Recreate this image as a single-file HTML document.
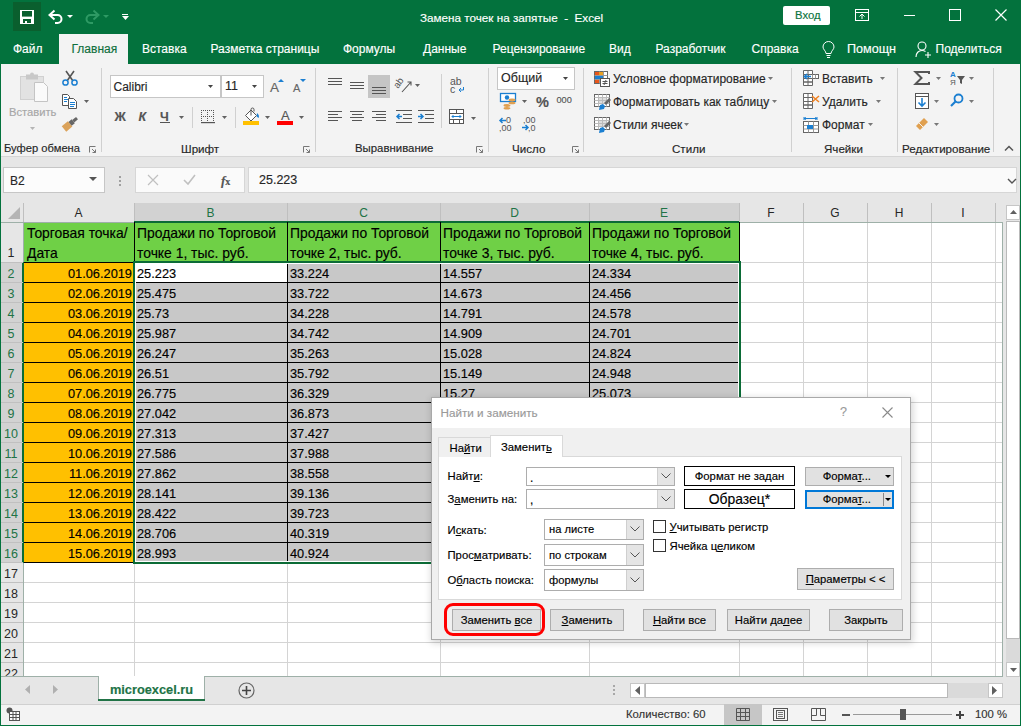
<!DOCTYPE html>
<html><head><meta charset="utf-8"><style>
html,body{margin:0;padding:0;width:1021px;height:726px;overflow:hidden;}
body{position:relative;font-family:"Liberation Sans",sans-serif;}
.a{position:absolute;box-sizing:border-box;}
.t{white-space:nowrap;-webkit-text-stroke:0.15px currentColor;}
svg.a{overflow:visible;}
</style></head><body>
<div class="a" style="left:0px;top:0px;width:1021px;height:726px;background:#03723d;"></div>
<div class="a" style="left:1px;top:64px;width:1019px;height:92px;background:#f3f3f3;"></div>
<div class="a" style="left:1px;top:156px;width:1019px;height:546px;background:#e6e6e6;"></div>
<div class="a" style="left:1px;top:156px;width:1019px;height:1px;background:#d5d5d5;"></div>
<div class="a" style="left:1px;top:702px;width:1019px;height:23px;background:#f3f3f3;"></div>
<div class="a" style="left:13px;top:2px;width:28px;height:29px;background:#0a5f2e;"></div>
<svg class="a" style="left:20px;top:10px;" width="14" height="14" viewBox="0 0 14 14"><rect x="0" y="0" width="14" height="14" fill="#fff"/><rect x="2" y="1" width="10" height="5.6" fill="#0a5f2e"/><rect x="3" y="9" width="8" height="4" fill="#0a5f2e"/><rect x="5" y="11" width="2" height="2" fill="#fff"/></svg>
<svg class="a" style="left:48px;top:9px;" width="16" height="15" viewBox="0 0 16 15"><path d="M3 6h6.5a4 4 0 0 1 0 8H7" fill="none" stroke="#fff" stroke-width="2"/><path d="M6.5 1.5L1.5 6l5 4.5" fill="none" stroke="#fff" stroke-width="2"/></svg>
<svg class="a" style="left:67px;top:15px;" width="6" height="3" viewBox="0 0 6 3"><path d="M0 0h6L3 3z" fill="#fff"/></svg>
<svg class="a" style="left:84px;top:9px;" width="16" height="15" viewBox="0 0 16 15"><path d="M13 6H6.5a4 4 0 0 0 0 8H9" fill="none" stroke="#2e9a64" stroke-width="2"/><path d="M9.5 1.5L14.5 6l-5 4.5" fill="none" stroke="#2e9a64" stroke-width="2"/></svg>
<svg class="a" style="left:103px;top:15px;" width="6" height="3" viewBox="0 0 6 3"><path d="M0 0h6L3 3z" fill="#2e9a64"/></svg>
<div class="a" style="left:122px;top:14px;width:6px;height:1px;background:#fff;"></div>
<svg class="a" style="left:122px;top:16px;" width="7" height="4" viewBox="0 0 7 4"><path d="M0 0h7L3.5 4z" fill="#fff"/></svg>
<div class="a t" style="left:420px;top:12.06px;font-size:11.7px;line-height:11.7px;color:#fff;">Замена точек на запятые&nbsp; -&nbsp; Excel</div>
<div class="a" style="left:783px;top:6px;width:47px;height:19px;background:#fff;border-radius:2px;"></div>
<div class="a t" style="left:795px;top:10.39px;font-size:11.3px;line-height:11.3px;color:#0b7440;">Вход</div>
<svg class="a" style="left:855px;top:9px;" width="14" height="12" viewBox="0 0 14 12"><rect x="0.5" y="0.5" width="13" height="11" fill="none" stroke="#fff"/><path d="M0.5 3.5h13" stroke="#fff"/><path d="M7 10V5M4.5 7.5L7 5l2.5 2.5" fill="none" stroke="#fff"/></svg>
<div class="a" style="left:904px;top:15px;width:11px;height:1px;background:#fff;"></div>
<svg class="a" style="left:949px;top:9px;" width="12" height="12" viewBox="0 0 12 12"><rect x="0.5" y="0.5" width="11" height="11" fill="none" stroke="#fff"/></svg>
<svg class="a" style="left:995px;top:9px;" width="12" height="12" viewBox="0 0 12 12"><path d="M0.5 0.5l11 11M11.5 0.5l-11 11" stroke="#fff" stroke-width="1.2"/></svg>
<div class="a" style="left:59px;top:34px;width:69px;height:30px;background:#f3f3f3;"></div>
<div class="a t" style="left:13px;top:43.30px;font-size:12px;line-height:12px;color:#fff;">Файл</div>
<div class="a t" style="left:71.5px;top:43.30px;font-size:12px;line-height:12px;color:#0f6f3c;">Главная</div>
<div class="a t" style="left:142px;top:43.30px;font-size:12px;line-height:12px;color:#fff;">Вставка</div>
<div class="a t" style="left:210.5px;top:43.30px;font-size:12px;line-height:12px;color:#fff;">Разметка страницы</div>
<div class="a t" style="left:343px;top:43.30px;font-size:12px;line-height:12px;color:#fff;">Формулы</div>
<div class="a t" style="left:423px;top:43.30px;font-size:12px;line-height:12px;color:#fff;">Данные</div>
<div class="a t" style="left:492.5px;top:43.30px;font-size:12px;line-height:12px;color:#fff;">Рецензирование</div>
<div class="a t" style="left:609px;top:43.30px;font-size:12px;line-height:12px;color:#fff;">Вид</div>
<div class="a t" style="left:655.5px;top:43.30px;font-size:12px;line-height:12px;color:#fff;">Разработчик</div>
<div class="a t" style="left:751.5px;top:43.30px;font-size:12px;line-height:12px;color:#fff;">Справка</div>
<div class="a t" style="left:847px;top:42.79px;font-size:12.6px;line-height:12.6px;color:#fff;">Помощн</div>
<div class="a t" style="left:935.5px;top:43.30px;font-size:12px;line-height:12px;color:#fff;">Поделиться</div>
<svg class="a" style="left:821.5px;top:41.5px;" width="13" height="17" viewBox="0 0 13 17"><path d="M4 11.5C4 9 1 7.5 1 5a5.5 5.5 0 0 1 11 0c0 2.5-3 4-3 6.5z" fill="none" stroke="#fff"/><path d="M4.5 13.5h4M5 15.5h3" stroke="#fff"/></svg>
<svg class="a" style="left:915px;top:41px;" width="17" height="17" viewBox="0 0 17 17"><circle cx="7" cy="5" r="4" fill="none" stroke="#fff" stroke-width="1.1"/><path d="M1 16c0-4 2.5-6.5 6-6.5 1.5 0 2.5 0.4 3.5 1" fill="none" stroke="#fff" stroke-width="1.1"/><path d="M13 11v6M10 14h6" stroke="#fff" stroke-width="1.1"/></svg>
<div class="a" style="left:101px;top:68px;width:1px;height:84px;background:#d0d0d0;"></div>
<div class="a" style="left:315px;top:68px;width:1px;height:84px;background:#d0d0d0;"></div>
<div class="a" style="left:488px;top:68px;width:1px;height:84px;background:#d0d0d0;"></div>
<div class="a" style="left:583px;top:68px;width:1px;height:84px;background:#d0d0d0;"></div>
<div class="a" style="left:791px;top:68px;width:1px;height:84px;background:#d0d0d0;"></div>
<div class="a" style="left:897px;top:68px;width:1px;height:84px;background:#d0d0d0;"></div>
<div class="a" style="left:993px;top:68px;width:1px;height:84px;background:#d0d0d0;"></div>
<svg class="a" style="left:20px;top:72px;" width="30" height="30" viewBox="0 0 30 30"><rect x="0.5" y="4.5" width="23" height="23" fill="#e2e2e2" stroke="#d0d0d0"/><rect x="6" y="2.5" width="12" height="5" fill="#c8c8c8"/><circle cx="12" cy="2.5" r="2" fill="#c8c8c8"/><path d="M14.5 10.5h9l4 4v15h-13z" fill="#fafafa" stroke="#c4c4c4"/></svg>
<div class="a t" style="left:9px;top:107.48px;font-size:11.2px;line-height:11.2px;color:#a6a6a6;">Вставить</div>
<svg class="a" style="left:30px;top:127px;" width="5" height="3" viewBox="0 0 5 3"><path d="M0 0h5L2.5 3z" fill="#b4b4b4"/></svg>
<svg class="a" style="left:62px;top:70px;" width="16" height="16" viewBox="0 0 16 16"><path d="M4 1l7 10M12 1L5 11" stroke="#555" stroke-width="1.6"/><circle cx="3.5" cy="12.5" r="2.6" fill="none" stroke="#1b7fd1" stroke-width="1.5"/><circle cx="12.5" cy="12.5" r="2.6" fill="none" stroke="#1b7fd1" stroke-width="1.5"/></svg>
<svg class="a" style="left:62px;top:94px;" width="16" height="15" viewBox="0 0 16 15"><path d="M0.5 0.5h5l2 2v9h-7z" fill="#fff" stroke="#555"/><path d="M6.5 4.5h5l3 3v7h-8z" fill="#fff" stroke="#555"/><path d="M2 3.5h3M2 5.5h4M2 7.5h3" stroke="#1b7fd1"/><path d="M8 8.5h5M8 10.5h5M8 12.5h4" stroke="#1b7fd1"/></svg>
<svg class="a" style="left:84px;top:100px;" width="5" height="3" viewBox="0 0 5 3"><path d="M0 0h5L2.5 3z" fill="#616161"/></svg>
<svg class="a" style="left:62px;top:116px;" width="17" height="15" viewBox="0 0 17 15"><g transform="rotate(-40 8.5 7.5)"><rect x="0" y="4" width="8" height="7" fill="#dba25a"/><rect x="8" y="5" width="4" height="5" fill="#666"/><rect x="12" y="6" width="5" height="3" fill="#666"/></g></svg>
<div class="a t" style="left:4px;top:142.88px;font-size:11.2px;line-height:11.2px;color:#262626;">Буфер обмена</div>
<svg class="a" style="left:89px;top:146px;" width="7" height="7" viewBox="0 0 7 7"><path d="M0.5 6.5v-6h6" fill="none" stroke="#777"/><path d="M3 3l3.5 3.5M6.5 3.5v3h-3" fill="none" stroke="#777"/></svg>
<div class="a" style="left:110px;top:75px;width:111px;height:23px;background:#fff;border:1px solid #c6c6c6;"></div>
<div class="a t" style="left:113.5px;top:80.80px;font-size:12px;line-height:12px;color:#262626;">Calibri</div>
<svg class="a" style="left:208px;top:85px;" width="5" height="3" viewBox="0 0 5 3"><path d="M0 0h5L2.5 3z" fill="#444"/></svg>
<div class="a" style="left:221px;top:75px;width:43px;height:23px;background:#fff;border:1px solid #c6c6c6;"></div>
<div class="a t" style="left:225px;top:80.38px;font-size:12.5px;line-height:12.5px;color:#262626;">11</div>
<svg class="a" style="left:252px;top:85px;" width="5" height="3" viewBox="0 0 5 3"><path d="M0 0h5L2.5 3z" fill="#444"/></svg>
<div class="a t" style="left:270px;top:80.53px;font-size:13.5px;line-height:13.5px;color:#666666;">A</div>
<svg class="a" style="left:278px;top:79px;" width="6" height="3" viewBox="0 0 6 3"><path d="M0 3h6L3 0z" fill="#1b7fd1"/></svg>
<div class="a t" style="left:293px;top:82.65px;font-size:11px;line-height:11px;color:#666666;">A</div>
<svg class="a" style="left:300px;top:79px;" width="6" height="3" viewBox="0 0 6 3"><path d="M0 0h6L3 3z" fill="#1b7fd1"/></svg>
<div class="a t" style="left:114.5px;top:111.38px;font-size:12.5px;line-height:12.5px;color:#555;font-weight:bold;">Ж</div>
<div class="a t" style="left:138.5px;top:111.38px;font-size:12.5px;line-height:12.5px;color:#555;font-weight:bold;font-style:italic;">К</div>
<div class="a t" style="left:160px;top:110.88px;font-size:12.5px;line-height:12.5px;color:#555;font-weight:bold;">Ч</div>
<div class="a" style="left:160px;top:122px;width:10px;height:1px;background:#555;"></div>
<svg class="a" style="left:179px;top:116px;" width="5" height="3" viewBox="0 0 5 3"><path d="M0 0h5L2.5 3z" fill="#616161"/></svg>
<div class="a" style="left:192px;top:107px;width:1px;height:21px;background:#d0d0d0;"></div>
<svg class="a" style="left:201px;top:110px;" width="14" height="14" viewBox="0 0 14 14"><rect x="0" y="0" width="1" height="1" fill="#555"/><rect x="2" y="0" width="1" height="1" fill="#555"/><rect x="4" y="0" width="1" height="1" fill="#555"/><rect x="6" y="0" width="1" height="1" fill="#555"/><rect x="8" y="0" width="1" height="1" fill="#555"/><rect x="10" y="0" width="1" height="1" fill="#555"/><rect x="12" y="0" width="1" height="1" fill="#555"/><rect x="0" y="2" width="1" height="1" fill="#555"/><rect x="6" y="2" width="1" height="1" fill="#555"/><rect x="12" y="2" width="1" height="1" fill="#555"/><rect x="0" y="4" width="1" height="1" fill="#555"/><rect x="6" y="4" width="1" height="1" fill="#555"/><rect x="12" y="4" width="1" height="1" fill="#555"/><rect x="0" y="6" width="1" height="1" fill="#555"/><rect x="2" y="6" width="1" height="1" fill="#555"/><rect x="4" y="6" width="1" height="1" fill="#555"/><rect x="6" y="6" width="1" height="1" fill="#555"/><rect x="8" y="6" width="1" height="1" fill="#555"/><rect x="10" y="6" width="1" height="1" fill="#555"/><rect x="12" y="6" width="1" height="1" fill="#555"/><rect x="0" y="8" width="1" height="1" fill="#555"/><rect x="6" y="8" width="1" height="1" fill="#555"/><rect x="12" y="8" width="1" height="1" fill="#555"/><rect x="0" y="10" width="1" height="1" fill="#555"/><rect x="6" y="10" width="1" height="1" fill="#555"/><rect x="12" y="10" width="1" height="1" fill="#555"/><rect x="0" y="12" width="14" height="1.2" fill="#555"/></svg>
<svg class="a" style="left:222px;top:116px;" width="5" height="3" viewBox="0 0 5 3"><path d="M0 0h5L2.5 3z" fill="#616161"/></svg>
<div class="a" style="left:235px;top:107px;width:1px;height:21px;background:#d0d0d0;"></div>
<svg class="a" style="left:243px;top:107px;" width="17" height="19" viewBox="0 0 17 19"><path d="M2.5 8.5L8 3l5.5 5.5L8 14z" fill="#fff" stroke="#555"/><path d="M8 8.5V2.5a1.5 1.5 0 0 1 3 0v2" fill="none" stroke="#555"/><path d="M14 6c2 1.8 2.3 3.5 1.6 5l-2-1.5z" fill="#1b7fd1"/><rect x="0" y="14" width="16" height="4" fill="#ffc000"/></svg>
<svg class="a" style="left:265px;top:116px;" width="5" height="3" viewBox="0 0 5 3"><path d="M0 0h5L2.5 3z" fill="#616161"/></svg>
<div class="a t" style="left:281px;top:109.45px;font-size:13px;line-height:13px;color:#555;">A</div>
<div class="a" style="left:277px;top:121px;width:16px;height:4px;background:#ff0000;"></div>
<svg class="a" style="left:299px;top:116px;" width="5" height="3" viewBox="0 0 5 3"><path d="M0 0h5L2.5 3z" fill="#616161"/></svg>
<div class="a t" style="left:181px;top:142.54px;font-size:11.6px;line-height:11.6px;color:#262626;">Шрифт</div>
<svg class="a" style="left:303px;top:146px;" width="7" height="7" viewBox="0 0 7 7"><path d="M0.5 6.5v-6h6" fill="none" stroke="#777"/><path d="M3 3l3.5 3.5M6.5 3.5v3h-3" fill="none" stroke="#777"/></svg>
<svg class="a" style="left:328px;top:78px;" width="16" height="12" viewBox="0 0 16 12"><rect x="0" y="0" width="14" height="1" fill="#555"/><rect x="0" y="3" width="14" height="1" fill="#555"/><rect x="0" y="6" width="14" height="1" fill="#555"/></svg>
<svg class="a" style="left:350px;top:82px;" width="16" height="12" viewBox="0 0 16 12"><rect x="0" y="0" width="14" height="1" fill="#555"/><rect x="0" y="3" width="14" height="1" fill="#555"/><rect x="0" y="6" width="14" height="1" fill="#555"/></svg>
<div class="a" style="left:368px;top:75px;width:22px;height:23px;background:#c5c5c5;"></div>
<svg class="a" style="left:372px;top:87px;" width="16" height="12" viewBox="0 0 16 12"><rect x="0" y="0" width="14" height="1" fill="#555"/><rect x="0" y="3" width="14" height="1" fill="#555"/><rect x="0" y="6" width="14" height="1" fill="#555"/></svg>
<svg class="a" style="left:396px;top:77px;" width="17" height="16" viewBox="0 0 17 16"><text x="0" y="0" font-size="9.5" font-family="Liberation Sans" fill="#555" transform="translate(2 12) rotate(-55)">ab</text><path d="M6 15L15 5M11.5 5h3.5v3.5" fill="none" stroke="#555" stroke-width="1.1"/></svg>
<svg class="a" style="left:415px;top:84px;" width="5" height="3" viewBox="0 0 5 3"><path d="M0 0h5L2.5 3z" fill="#616161"/></svg>
<svg class="a" style="left:328px;top:111px;" width="16" height="12" viewBox="0 0 16 12"><rect x="0" y="0" width="14" height="1" fill="#555"/><rect x="0" y="3" width="10" height="1" fill="#555"/><rect x="0" y="6" width="14" height="1" fill="#555"/><rect x="0" y="9" width="10" height="1" fill="#555"/></svg>
<svg class="a" style="left:350px;top:111px;" width="16" height="12" viewBox="0 0 16 12"><rect x="0" y="0" width="14" height="1" fill="#555"/><rect x="2" y="3" width="10" height="1" fill="#555"/><rect x="0" y="6" width="14" height="1" fill="#555"/><rect x="2" y="9" width="10" height="1" fill="#555"/></svg>
<svg class="a" style="left:372px;top:111px;" width="16" height="12" viewBox="0 0 16 12"><rect x="0" y="0" width="14" height="1" fill="#555"/><rect x="4" y="3" width="10" height="1" fill="#555"/><rect x="0" y="6" width="14" height="1" fill="#555"/><rect x="4" y="9" width="10" height="1" fill="#555"/></svg>
<svg class="a" style="left:396px;top:110px;" width="17" height="13" viewBox="0 0 17 13"><path d="M0 0.5h16M7 4.5h9M7 8.5h9M0 12.5h16" stroke="#555"/><path d="M6 6.5H1M3.5 4L1 6.5 3.5 9" fill="none" stroke="#1b7fd1" stroke-width="1.5"/></svg>
<svg class="a" style="left:418px;top:110px;" width="17" height="13" viewBox="0 0 17 13"><path d="M0 0.5h16M7 4.5h9M7 8.5h9M0 12.5h16" stroke="#555"/><path d="M0 6.5h5M2.5 4L5 6.5 2.5 9" fill="none" stroke="#1b7fd1" stroke-width="1.5"/></svg>
<div class="a" style="left:441px;top:74px;width:1px;height:54px;background:#d0d0d0;"></div>
<svg class="a" style="left:450px;top:77px;" width="16" height="17" viewBox="0 0 16 17"><text x="0" y="8" font-size="10.5" font-family="Liberation Sans" fill="#555">ab</text><text x="0" y="16" font-size="10.5" font-family="Liberation Sans" fill="#555">c</text><path d="M13.5 10v3H9M11 11l-2 2 2 2" fill="none" stroke="#1b7fd1"/></svg>
<svg class="a" style="left:449px;top:109px;" width="16" height="15" viewBox="0 0 16 15"><rect x="0.5" y="0.5" width="14" height="14" fill="#fff" stroke="#555"/><path d="M0.5 4.5h14M0.5 10.5h14M7.5 0.5v4M4.5 10.5v4M10.5 10.5v4" stroke="#555"/><path d="M3 7.5h9M4.5 6L3 7.5 4.5 9M10.5 6L12 7.5 10.5 9" fill="none" stroke="#1b7fd1"/></svg>
<svg class="a" style="left:471px;top:117px;" width="5" height="3" viewBox="0 0 5 3"><path d="M0 0h5L2.5 3z" fill="#616161"/></svg>
<div class="a t" style="left:355px;top:142.71px;font-size:11.4px;line-height:11.4px;color:#262626;">Выравнивание</div>
<svg class="a" style="left:476px;top:146px;" width="7" height="7" viewBox="0 0 7 7"><path d="M0.5 6.5v-6h6" fill="none" stroke="#777"/><path d="M3 3l3.5 3.5M6.5 3.5v3h-3" fill="none" stroke="#777"/></svg>
<div class="a" style="left:497px;top:67px;width:78px;height:23px;background:#fff;border:1px solid #c6c6c6;"></div>
<div class="a t" style="left:501px;top:72.38px;font-size:12.5px;line-height:12.5px;color:#262626;">Общий</div>
<svg class="a" style="left:563px;top:77px;" width="5" height="3" viewBox="0 0 5 3"><path d="M0 0h5L2.5 3z" fill="#444"/></svg>
<svg class="a" style="left:500px;top:93px;" width="17" height="17" viewBox="0 0 17 17"><rect x="0.5" y="0.5" width="15" height="8" fill="#fff" stroke="#1b7fd1" stroke-width="1.3"/><circle cx="7" cy="4.5" r="2.2" fill="#1b7fd1"/><ellipse cx="12" cy="7" rx="3.5" ry="1.4" fill="#e0a050"/><ellipse cx="12" cy="10" rx="3.5" ry="1.3" fill="#e0a050"/><ellipse cx="7" cy="12.5" rx="3.5" ry="1.4" fill="#e0a050"/><ellipse cx="7" cy="15.3" rx="3.5" ry="1.3" fill="#e0a050"/></svg>
<svg class="a" style="left:522px;top:100px;" width="5" height="3" viewBox="0 0 5 3"><path d="M0 0h5L2.5 3z" fill="#616161"/></svg>
<div class="a t" style="left:536px;top:95.17px;font-size:14.5px;line-height:14.5px;color:#555;font-weight:bold;">%</div>
<div class="a t" style="left:556.5px;top:96.18px;font-size:9.2px;line-height:9.2px;color:#555;">000</div>
<svg class="a" style="left:498px;top:116px;" width="20" height="15" viewBox="0 0 20 15"><path d="M8 4.5H2M4.5 2L2 4.5l2.5 2.5" fill="none" stroke="#1b7fd1" stroke-width="1.5"/><text x="8" y="7" font-size="9" font-family="Liberation Sans" fill="#555">0</text><text x="1" y="14.5" font-size="9" font-family="Liberation Sans" fill="#555">,00</text></svg>
<svg class="a" style="left:522px;top:116px;" width="20" height="15" viewBox="0 0 20 15"><text x="1" y="7" font-size="9" font-family="Liberation Sans" fill="#555">,00</text><path d="M0 11.5h6M3.5 9L6 11.5 3.5 14" fill="none" stroke="#1b7fd1" stroke-width="1.5"/><text x="6" y="14.5" font-size="9" font-family="Liberation Sans" fill="#555">,0</text></svg>
<div class="a t" style="left:512px;top:142.54px;font-size:11.6px;line-height:11.6px;color:#262626;">Число</div>
<svg class="a" style="left:572px;top:146px;" width="7" height="7" viewBox="0 0 7 7"><path d="M0.5 6.5v-6h6" fill="none" stroke="#777"/><path d="M3 3l3.5 3.5M6.5 3.5v3h-3" fill="none" stroke="#777"/></svg>
<svg class="a" style="left:594px;top:71px;" width="17" height="17" viewBox="0 0 17 17"><rect x="0.5" y="0.5" width="13" height="12" fill="#fff" stroke="#666"/><path d="M0.5 4.5h13M0.5 8.5h13M5.5 0.5v12M9.5 0.5v12" stroke="#999"/><rect x="1" y="1" width="4" height="3" fill="#e8561b"/><rect x="5" y="1" width="4" height="3" fill="#e8a020"/><rect x="1" y="5" width="8" height="3" fill="#1b7fd1"/><rect x="1" y="9" width="4" height="3" fill="#e8561b"/><rect x="6.5" y="7.5" width="9" height="8" fill="#fff" stroke="#555"/><path d="M8.5 10.5h5M8.5 12.5h5M12 9l-2 5" stroke="#555"/></svg>
<div class="a t" style="left:613px;top:73.30px;font-size:12px;line-height:12px;color:#262626;">Условное форматирование</div>
<svg class="a" style="left:768px;top:77px;" width="5" height="3" viewBox="0 0 5 3"><path d="M0 0h5L2.5 3z" fill="#777"/></svg>
<svg class="a" style="left:594px;top:94px;" width="18" height="17" viewBox="0 0 18 17"><rect x="0.5" y="0.5" width="15" height="12" fill="#fff" stroke="#666"/><rect x="4" y="4" width="8" height="6" fill="#ddd"/><path d="M0.5 3.5h15M0.5 6.5h15M0.5 9.5h15M4.5 0.5v12M8.5 0.5v12M12.5 0.5v12" stroke="#bbb"/><path d="M10 9l5-5 2 2-5 5z" fill="#666"/><path d="M5 16l1-5 3-1 2 2-1 3z" fill="#1b7fd1"/></svg>
<div class="a t" style="left:613px;top:96.30px;font-size:12px;line-height:12px;color:#262626;">Форматировать как таблицу</div>
<svg class="a" style="left:772px;top:100px;" width="5" height="3" viewBox="0 0 5 3"><path d="M0 0h5L2.5 3z" fill="#777"/></svg>
<svg class="a" style="left:594px;top:117px;" width="18" height="17" viewBox="0 0 18 17"><rect x="0.5" y="0.5" width="15" height="12" fill="#fff" stroke="#666"/><rect x="4" y="4" width="8" height="6" fill="#ddd"/><path d="M0.5 3.5h15M0.5 6.5h15M0.5 9.5h15M4.5 0.5v12M8.5 0.5v12M12.5 0.5v12" stroke="#bbb"/><path d="M10 9l5-5 2 2-5 5z" fill="#666"/><path d="M5 16l1-5 3-1 2 2-1 3z" fill="#1b7fd1"/></svg>
<div class="a t" style="left:613px;top:119.30px;font-size:12px;line-height:12px;color:#262626;">Стили ячеек</div>
<svg class="a" style="left:684px;top:123px;" width="5" height="3" viewBox="0 0 5 3"><path d="M0 0h5L2.5 3z" fill="#777"/></svg>
<div class="a t" style="left:672px;top:142.54px;font-size:11.6px;line-height:11.6px;color:#262626;">Стили</div>
<svg class="a" style="left:803px;top:70px;" width="17" height="17" viewBox="0 0 17 17"><path d="M0.5 0.5h9v4h-9zM0.5 4.5h9v4h-9zM0.5 8.5h9v3.5h-9zM0.5 12h9v3.5h-9zM5 0.5v15" fill="#fff" stroke="#666"/><rect x="5.5" y="4.5" width="10" height="4" fill="#fff" stroke="#666"/><path d="M9.5 4.5v4M12.5 4.5v4" stroke="#999"/><path d="M8 6.5H1.5M4 4L1.5 6.5 4 9" fill="none" stroke="#1b7fd1" stroke-width="1.6"/></svg>
<div class="a t" style="left:822px;top:73.30px;font-size:12px;line-height:12px;color:#262626;">Вставить</div>
<svg class="a" style="left:880px;top:77px;" width="5" height="3" viewBox="0 0 5 3"><path d="M0 0h5L2.5 3z" fill="#777"/></svg>
<svg class="a" style="left:803px;top:93px;" width="17" height="17" viewBox="0 0 17 17"><path d="M0.5 0.5h9v4h-9zM0.5 4.5h9v4h-9zM0.5 8.5h9v3.5h-9zM0.5 12h9v3.5h-9zM5 0.5v15" fill="#fff" stroke="#666"/><path d="M9 3l7 6M16 3l-7 6" stroke="#f08020" stroke-width="1.5"/></svg>
<div class="a t" style="left:822px;top:96.30px;font-size:12px;line-height:12px;color:#262626;">Удалить</div>
<svg class="a" style="left:876px;top:100px;" width="5" height="3" viewBox="0 0 5 3"><path d="M0 0h5L2.5 3z" fill="#777"/></svg>
<svg class="a" style="left:803px;top:117px;" width="17" height="17" viewBox="0 0 17 17"><rect x="0.5" y="4.5" width="15" height="11" fill="#fff" stroke="#666"/><path d="M0.5 8.5h15M0.5 12h15M5.5 4.5v11M10.5 4.5v11" stroke="#999"/><rect x="4" y="8" width="6" height="4" fill="#1b7fd1"/><path d="M1 1.5h13M1 0v3M14 0v3M3 0.5L1 1.5 3 2.5M12 0.5L14 1.5 12 2.5" fill="none" stroke="#1b7fd1"/></svg>
<div class="a t" style="left:822px;top:119.30px;font-size:12px;line-height:12px;color:#262626;">Формат</div>
<svg class="a" style="left:868px;top:123px;" width="5" height="3" viewBox="0 0 5 3"><path d="M0 0h5L2.5 3z" fill="#777"/></svg>
<div class="a t" style="left:824px;top:142.54px;font-size:11.6px;line-height:11.6px;color:#262626;">Ячейки</div>
<svg class="a" style="left:914px;top:71px;" width="16" height="14" viewBox="0 0 16 14"><path d="M15 3V1H1.5l6 6-6 6H15v-2" fill="none" stroke="#555" stroke-width="2"/></svg>
<svg class="a" style="left:936px;top:77px;" width="5" height="3" viewBox="0 0 5 3"><path d="M0 0h5L2.5 3z" fill="#777"/></svg>
<svg class="a" style="left:950px;top:70px;" width="16" height="16" viewBox="0 0 16 16"><text x="0" y="7" font-size="8" font-family="Liberation Sans" font-weight="bold" fill="#1b7fd1">A</text><text x="0" y="15" font-size="8" font-family="Liberation Sans" fill="#555">Я</text><path d="M7 6h8l-3 4v4l-2-1v-3z" fill="#555"/></svg>
<svg class="a" style="left:969px;top:77px;" width="5" height="3" viewBox="0 0 5 3"><path d="M0 0h5L2.5 3z" fill="#777"/></svg>
<svg class="a" style="left:915px;top:93px;" width="15" height="16" viewBox="0 0 15 16"><rect x="0.5" y="0.5" width="13" height="15" fill="#fff" stroke="#555"/><path d="M0.5 3.5h13" stroke="#555"/><path d="M7 5v8M3.5 9.5L7 13l3.5-3.5" fill="none" stroke="#1b7fd1" stroke-width="1.6"/></svg>
<svg class="a" style="left:934px;top:100px;" width="5" height="3" viewBox="0 0 5 3"><path d="M0 0h5L2.5 3z" fill="#777"/></svg>
<svg class="a" style="left:950px;top:93px;" width="14" height="14" viewBox="0 0 14 14"><circle cx="8.5" cy="5.5" r="4" fill="none" stroke="#1b7fd1" stroke-width="1.8"/><path d="M6 8l-5 5" stroke="#1b7fd1" stroke-width="2.2"/></svg>
<svg class="a" style="left:969px;top:100px;" width="5" height="3" viewBox="0 0 5 3"><path d="M0 0h5L2.5 3z" fill="#777"/></svg>
<svg class="a" style="left:915px;top:117px;" width="14" height="13" viewBox="0 0 14 13"><path d="M1 9l8-8 4 4-8 8z" fill="#e0a050"/><path d="M4 6l4 4" stroke="#f3f3f3"/></svg>
<svg class="a" style="left:934px;top:123px;" width="5" height="3" viewBox="0 0 5 3"><path d="M0 0h5L2.5 3z" fill="#777"/></svg>
<div class="a t" style="left:902px;top:142.54px;font-size:11.6px;line-height:11.6px;color:#262626;">Редактирование</div>
<svg class="a" style="left:1004px;top:145px;" width="10" height="6" viewBox="0 0 10 6"><path d="M1 5.5L5 1.5l4 4" fill="none" stroke="#555" stroke-width="1.5"/></svg>
<div class="a" style="left:24px;top:223px;width:978px;height:453px;background:#fff;"></div>
<div class="a" style="left:134px;top:203px;width:605px;height:19px;background:#d2d2d2;"></div>
<div class="a" style="left:23px;top:203px;width:1px;height:19px;background:#bfbfbf;"></div>
<div class="a" style="left:134px;top:203px;width:1px;height:19px;background:#bfbfbf;"></div>
<div class="a" style="left:287px;top:203px;width:1px;height:19px;background:#bfbfbf;"></div>
<div class="a" style="left:440px;top:203px;width:1px;height:19px;background:#bfbfbf;"></div>
<div class="a" style="left:589px;top:203px;width:1px;height:19px;background:#bfbfbf;"></div>
<div class="a" style="left:739px;top:203px;width:1px;height:19px;background:#bfbfbf;"></div>
<div class="a" style="left:803px;top:203px;width:1px;height:19px;background:#bfbfbf;"></div>
<div class="a" style="left:867px;top:203px;width:1px;height:19px;background:#bfbfbf;"></div>
<div class="a" style="left:931px;top:203px;width:1px;height:19px;background:#bfbfbf;"></div>
<div class="a" style="left:995px;top:203px;width:1px;height:19px;background:#bfbfbf;"></div>
<div class="a" style="left:23px;top:203px;width:1px;height:19px;background:#bfbfbf;"></div>
<div class="a" style="left:1px;top:222px;width:1001px;height:1px;background:#9eb0a8;"></div>
<div class="a" style="left:134px;top:221px;width:605px;height:2px;background:#0b6b36;"></div>
<svg class="a" style="left:8px;top:207px;" width="13" height="12" viewBox="0 0 13 12"><path d="M12 0V12H0z" fill="#b4b4b4"/></svg>
<div class="a t" style="left:23px;top:207.30px;font-size:12px;line-height:12px;color:#262626;width:111px;text-align:center;-webkit-text-stroke:0;">A</div>
<div class="a t" style="left:134px;top:207.30px;font-size:12px;line-height:12px;color:#217346;width:153px;text-align:center;-webkit-text-stroke:0;">B</div>
<div class="a t" style="left:287px;top:207.30px;font-size:12px;line-height:12px;color:#217346;width:153px;text-align:center;-webkit-text-stroke:0;">C</div>
<div class="a t" style="left:440px;top:207.30px;font-size:12px;line-height:12px;color:#217346;width:149px;text-align:center;-webkit-text-stroke:0;">D</div>
<div class="a t" style="left:589px;top:207.30px;font-size:12px;line-height:12px;color:#217346;width:150px;text-align:center;-webkit-text-stroke:0;">E</div>
<div class="a t" style="left:739px;top:207.30px;font-size:12px;line-height:12px;color:#262626;width:64px;text-align:center;-webkit-text-stroke:0;">F</div>
<div class="a t" style="left:803px;top:207.30px;font-size:12px;line-height:12px;color:#262626;width:64px;text-align:center;-webkit-text-stroke:0;">G</div>
<div class="a t" style="left:867px;top:207.30px;font-size:12px;line-height:12px;color:#262626;width:64px;text-align:center;-webkit-text-stroke:0;">H</div>
<div class="a t" style="left:931px;top:207.30px;font-size:12px;line-height:12px;color:#262626;width:64px;text-align:center;-webkit-text-stroke:0;">I</div>
<div class="a" style="left:1px;top:262px;width:22px;height:300px;background:#d2d2d2;"></div>
<div class="a" style="left:22px;top:262px;width:2px;height:301px;background:#0b6b36;"></div>
<div class="a" style="left:23px;top:223px;width:1px;height:39px;background:#9eb0a8;"></div>
<div class="a" style="left:23px;top:563px;width:1px;height:113px;background:#9eb0a8;"></div>
<div class="a" style="left:1px;top:262px;width:22px;height:1px;background:#c0c0c0;"></div>
<div class="a" style="left:1px;top:282px;width:22px;height:1px;background:#c0c0c0;"></div>
<div class="a" style="left:1px;top:302px;width:22px;height:1px;background:#c0c0c0;"></div>
<div class="a" style="left:1px;top:322px;width:22px;height:1px;background:#c0c0c0;"></div>
<div class="a" style="left:1px;top:342px;width:22px;height:1px;background:#c0c0c0;"></div>
<div class="a" style="left:1px;top:362px;width:22px;height:1px;background:#c0c0c0;"></div>
<div class="a" style="left:1px;top:382px;width:22px;height:1px;background:#c0c0c0;"></div>
<div class="a" style="left:1px;top:402px;width:22px;height:1px;background:#c0c0c0;"></div>
<div class="a" style="left:1px;top:422px;width:22px;height:1px;background:#c0c0c0;"></div>
<div class="a" style="left:1px;top:442px;width:22px;height:1px;background:#c0c0c0;"></div>
<div class="a" style="left:1px;top:462px;width:22px;height:1px;background:#c0c0c0;"></div>
<div class="a" style="left:1px;top:482px;width:22px;height:1px;background:#c0c0c0;"></div>
<div class="a" style="left:1px;top:502px;width:22px;height:1px;background:#c0c0c0;"></div>
<div class="a" style="left:1px;top:522px;width:22px;height:1px;background:#c0c0c0;"></div>
<div class="a" style="left:1px;top:542px;width:22px;height:1px;background:#c0c0c0;"></div>
<div class="a" style="left:1px;top:562px;width:22px;height:1px;background:#c0c0c0;"></div>
<div class="a" style="left:1px;top:582px;width:22px;height:1px;background:#c0c0c0;"></div>
<div class="a" style="left:1px;top:602px;width:22px;height:1px;background:#c0c0c0;"></div>
<div class="a" style="left:1px;top:622px;width:22px;height:1px;background:#c0c0c0;"></div>
<div class="a" style="left:1px;top:642px;width:22px;height:1px;background:#c0c0c0;"></div>
<div class="a" style="left:1px;top:662px;width:22px;height:1px;background:#c0c0c0;"></div>
<div class="a t" style="left:0px;top:246.88px;font-size:12.5px;line-height:12.5px;color:#262626;width:22px;text-align:center;-webkit-text-stroke:0;">1</div>
<div class="a t" style="left:0px;top:267.88px;font-size:12.5px;line-height:12.5px;color:#217346;width:22px;text-align:center;-webkit-text-stroke:0;">2</div>
<div class="a t" style="left:0px;top:287.88px;font-size:12.5px;line-height:12.5px;color:#217346;width:22px;text-align:center;-webkit-text-stroke:0;">3</div>
<div class="a t" style="left:0px;top:307.88px;font-size:12.5px;line-height:12.5px;color:#217346;width:22px;text-align:center;-webkit-text-stroke:0;">4</div>
<div class="a t" style="left:0px;top:327.88px;font-size:12.5px;line-height:12.5px;color:#217346;width:22px;text-align:center;-webkit-text-stroke:0;">5</div>
<div class="a t" style="left:0px;top:347.88px;font-size:12.5px;line-height:12.5px;color:#217346;width:22px;text-align:center;-webkit-text-stroke:0;">6</div>
<div class="a t" style="left:0px;top:367.88px;font-size:12.5px;line-height:12.5px;color:#217346;width:22px;text-align:center;-webkit-text-stroke:0;">7</div>
<div class="a t" style="left:0px;top:387.88px;font-size:12.5px;line-height:12.5px;color:#217346;width:22px;text-align:center;-webkit-text-stroke:0;">8</div>
<div class="a t" style="left:0px;top:407.88px;font-size:12.5px;line-height:12.5px;color:#217346;width:22px;text-align:center;-webkit-text-stroke:0;">9</div>
<div class="a t" style="left:0px;top:427.88px;font-size:12.5px;line-height:12.5px;color:#217346;width:22px;text-align:center;-webkit-text-stroke:0;">10</div>
<div class="a t" style="left:0px;top:447.88px;font-size:12.5px;line-height:12.5px;color:#217346;width:22px;text-align:center;-webkit-text-stroke:0;">11</div>
<div class="a t" style="left:0px;top:467.88px;font-size:12.5px;line-height:12.5px;color:#217346;width:22px;text-align:center;-webkit-text-stroke:0;">12</div>
<div class="a t" style="left:0px;top:487.88px;font-size:12.5px;line-height:12.5px;color:#217346;width:22px;text-align:center;-webkit-text-stroke:0;">13</div>
<div class="a t" style="left:0px;top:507.88px;font-size:12.5px;line-height:12.5px;color:#217346;width:22px;text-align:center;-webkit-text-stroke:0;">14</div>
<div class="a t" style="left:0px;top:527.88px;font-size:12.5px;line-height:12.5px;color:#217346;width:22px;text-align:center;-webkit-text-stroke:0;">15</div>
<div class="a t" style="left:0px;top:547.88px;font-size:12.5px;line-height:12.5px;color:#217346;width:22px;text-align:center;-webkit-text-stroke:0;">16</div>
<div class="a t" style="left:0px;top:567.88px;font-size:12.5px;line-height:12.5px;color:#262626;width:22px;text-align:center;-webkit-text-stroke:0;">17</div>
<div class="a t" style="left:0px;top:587.88px;font-size:12.5px;line-height:12.5px;color:#262626;width:22px;text-align:center;-webkit-text-stroke:0;">18</div>
<div class="a t" style="left:0px;top:607.88px;font-size:12.5px;line-height:12.5px;color:#262626;width:22px;text-align:center;-webkit-text-stroke:0;">19</div>
<div class="a t" style="left:0px;top:627.88px;font-size:12.5px;line-height:12.5px;color:#262626;width:22px;text-align:center;-webkit-text-stroke:0;">20</div>
<div class="a t" style="left:0px;top:647.88px;font-size:12.5px;line-height:12.5px;color:#262626;width:22px;text-align:center;-webkit-text-stroke:0;">21</div>
<div class="a t" style="left:0px;top:667.88px;font-size:12.5px;line-height:12.5px;color:#262626;width:22px;text-align:center;-webkit-text-stroke:0;">22</div>
<div class="a" style="left:134px;top:223px;width:1px;height:453px;background:#d4d4d4;"></div>
<div class="a" style="left:287px;top:223px;width:1px;height:453px;background:#d4d4d4;"></div>
<div class="a" style="left:440px;top:223px;width:1px;height:453px;background:#d4d4d4;"></div>
<div class="a" style="left:589px;top:223px;width:1px;height:453px;background:#d4d4d4;"></div>
<div class="a" style="left:739px;top:223px;width:1px;height:453px;background:#d4d4d4;"></div>
<div class="a" style="left:803px;top:223px;width:1px;height:453px;background:#d4d4d4;"></div>
<div class="a" style="left:867px;top:223px;width:1px;height:453px;background:#d4d4d4;"></div>
<div class="a" style="left:931px;top:223px;width:1px;height:453px;background:#d4d4d4;"></div>
<div class="a" style="left:995px;top:223px;width:1px;height:453px;background:#d4d4d4;"></div>
<div class="a" style="left:24px;top:262px;width:978px;height:1px;background:#d4d4d4;"></div>
<div class="a" style="left:24px;top:282px;width:978px;height:1px;background:#d4d4d4;"></div>
<div class="a" style="left:24px;top:302px;width:978px;height:1px;background:#d4d4d4;"></div>
<div class="a" style="left:24px;top:322px;width:978px;height:1px;background:#d4d4d4;"></div>
<div class="a" style="left:24px;top:342px;width:978px;height:1px;background:#d4d4d4;"></div>
<div class="a" style="left:24px;top:362px;width:978px;height:1px;background:#d4d4d4;"></div>
<div class="a" style="left:24px;top:382px;width:978px;height:1px;background:#d4d4d4;"></div>
<div class="a" style="left:24px;top:402px;width:978px;height:1px;background:#d4d4d4;"></div>
<div class="a" style="left:24px;top:422px;width:978px;height:1px;background:#d4d4d4;"></div>
<div class="a" style="left:24px;top:442px;width:978px;height:1px;background:#d4d4d4;"></div>
<div class="a" style="left:24px;top:462px;width:978px;height:1px;background:#d4d4d4;"></div>
<div class="a" style="left:24px;top:482px;width:978px;height:1px;background:#d4d4d4;"></div>
<div class="a" style="left:24px;top:502px;width:978px;height:1px;background:#d4d4d4;"></div>
<div class="a" style="left:24px;top:522px;width:978px;height:1px;background:#d4d4d4;"></div>
<div class="a" style="left:24px;top:542px;width:978px;height:1px;background:#d4d4d4;"></div>
<div class="a" style="left:24px;top:562px;width:978px;height:1px;background:#d4d4d4;"></div>
<div class="a" style="left:24px;top:582px;width:978px;height:1px;background:#d4d4d4;"></div>
<div class="a" style="left:24px;top:602px;width:978px;height:1px;background:#d4d4d4;"></div>
<div class="a" style="left:24px;top:622px;width:978px;height:1px;background:#d4d4d4;"></div>
<div class="a" style="left:24px;top:642px;width:978px;height:1px;background:#d4d4d4;"></div>
<div class="a" style="left:24px;top:662px;width:978px;height:1px;background:#d4d4d4;"></div>
<div class="a" style="left:1002px;top:222px;width:1px;height:455px;background:#9eb0a8;"></div>
<div class="a" style="left:1px;top:676px;width:1002px;height:1px;background:#9eb0a8;"></div>
<div class="a" style="left:24px;top:223px;width:715px;height:39px;background:#6fd046;"></div>
<div class="a" style="left:24px;top:262px;width:110px;height:300px;background:#ffc000;"></div>
<div class="a" style="left:135px;top:263px;width:604px;height:299px;background:#fff;"></div>
<div class="a" style="left:136px;top:264px;width:602px;height:297px;background:#c8c8c8;"></div>
<div class="a" style="left:136px;top:264px;width:151px;height:18px;background:#fff;"></div>
<div class="a" style="left:134px;top:222px;width:1px;height:39px;background:#000;"></div>
<div class="a" style="left:134px;top:263px;width:1px;height:299px;background:#000;"></div>
<div class="a" style="left:287px;top:222px;width:1px;height:39px;background:#000;"></div>
<div class="a" style="left:287px;top:264px;width:1px;height:297px;background:#000;"></div>
<div class="a" style="left:440px;top:222px;width:1px;height:39px;background:#000;"></div>
<div class="a" style="left:440px;top:264px;width:1px;height:297px;background:#000;"></div>
<div class="a" style="left:589px;top:222px;width:1px;height:39px;background:#000;"></div>
<div class="a" style="left:589px;top:264px;width:1px;height:297px;background:#000;"></div>
<div class="a" style="left:739px;top:222px;width:1px;height:39px;background:#000;"></div>
<div class="a" style="left:24px;top:262px;width:110px;height:1px;background:#000;"></div>
<div class="a" style="left:24px;top:282px;width:110px;height:1px;background:#000;"></div>
<div class="a" style="left:136px;top:282px;width:602px;height:1px;background:#000;"></div>
<div class="a" style="left:24px;top:302px;width:110px;height:1px;background:#000;"></div>
<div class="a" style="left:136px;top:302px;width:602px;height:1px;background:#000;"></div>
<div class="a" style="left:24px;top:322px;width:110px;height:1px;background:#000;"></div>
<div class="a" style="left:136px;top:322px;width:602px;height:1px;background:#000;"></div>
<div class="a" style="left:24px;top:342px;width:110px;height:1px;background:#000;"></div>
<div class="a" style="left:136px;top:342px;width:602px;height:1px;background:#000;"></div>
<div class="a" style="left:24px;top:362px;width:110px;height:1px;background:#000;"></div>
<div class="a" style="left:136px;top:362px;width:602px;height:1px;background:#000;"></div>
<div class="a" style="left:24px;top:382px;width:110px;height:1px;background:#000;"></div>
<div class="a" style="left:136px;top:382px;width:602px;height:1px;background:#000;"></div>
<div class="a" style="left:24px;top:402px;width:110px;height:1px;background:#000;"></div>
<div class="a" style="left:136px;top:402px;width:602px;height:1px;background:#000;"></div>
<div class="a" style="left:24px;top:422px;width:110px;height:1px;background:#000;"></div>
<div class="a" style="left:136px;top:422px;width:602px;height:1px;background:#000;"></div>
<div class="a" style="left:24px;top:442px;width:110px;height:1px;background:#000;"></div>
<div class="a" style="left:136px;top:442px;width:602px;height:1px;background:#000;"></div>
<div class="a" style="left:24px;top:462px;width:110px;height:1px;background:#000;"></div>
<div class="a" style="left:136px;top:462px;width:602px;height:1px;background:#000;"></div>
<div class="a" style="left:24px;top:482px;width:110px;height:1px;background:#000;"></div>
<div class="a" style="left:136px;top:482px;width:602px;height:1px;background:#000;"></div>
<div class="a" style="left:24px;top:502px;width:110px;height:1px;background:#000;"></div>
<div class="a" style="left:136px;top:502px;width:602px;height:1px;background:#000;"></div>
<div class="a" style="left:24px;top:522px;width:110px;height:1px;background:#000;"></div>
<div class="a" style="left:136px;top:522px;width:602px;height:1px;background:#000;"></div>
<div class="a" style="left:24px;top:542px;width:110px;height:1px;background:#000;"></div>
<div class="a" style="left:136px;top:542px;width:602px;height:1px;background:#000;"></div>
<div class="a" style="left:24px;top:562px;width:110px;height:1px;background:#000;"></div>
<div class="a" style="left:136px;top:562px;width:602px;height:1px;background:#000;"></div>
<div class="a" style="left:133px;top:261px;width:608px;height:2px;background:#0b6b36;"></div>
<div class="a" style="left:133px;top:261px;width:2px;height:303px;background:#0b6b36;"></div>
<div class="a" style="left:739px;top:261px;width:2px;height:303px;background:#0b6b36;"></div>
<div class="a" style="left:133px;top:562px;width:608px;height:2px;background:#0b6b36;"></div>
<div class="a t" style="left:27px;top:226.88px;font-size:13.9px;line-height:13.9px;color:#000;">Торговая точка/</div>
<div class="a t" style="left:27px;top:246.69px;font-size:13.9px;line-height:13.9px;color:#000;">Дата</div>
<div class="a t" style="left:137px;top:226.88px;font-size:13.9px;line-height:13.9px;color:#000;">Продажи по Торговой</div>
<div class="a t" style="left:137px;top:246.69px;font-size:13.9px;line-height:13.9px;color:#000;">точке 1, тыс. руб.</div>
<div class="a t" style="left:290px;top:226.88px;font-size:13.9px;line-height:13.9px;color:#000;">Продажи по Торговой</div>
<div class="a t" style="left:290px;top:246.69px;font-size:13.9px;line-height:13.9px;color:#000;">точке 2, тыс. руб.</div>
<div class="a t" style="left:443px;top:226.88px;font-size:13.9px;line-height:13.9px;color:#000;">Продажи по Торговой</div>
<div class="a t" style="left:443px;top:246.69px;font-size:13.9px;line-height:13.9px;color:#000;">точке 3, тыс. руб.</div>
<div class="a t" style="left:592px;top:226.88px;font-size:13.9px;line-height:13.9px;color:#000;">Продажи по Торговой</div>
<div class="a t" style="left:592px;top:246.69px;font-size:13.9px;line-height:13.9px;color:#000;">точке 4, тыс. руб.</div>
<div class="a t" style="left:24px;top:268.12px;font-size:12.8px;line-height:12.8px;color:#000;width:108px;text-align:right;">01.06.2019</div>
<div class="a t" style="left:137px;top:268.12px;font-size:12.8px;line-height:12.8px;color:#000;">25.223</div>
<div class="a t" style="left:290px;top:268.12px;font-size:12.8px;line-height:12.8px;color:#000;">33.224</div>
<div class="a t" style="left:443px;top:268.12px;font-size:12.8px;line-height:12.8px;color:#000;">14.557</div>
<div class="a t" style="left:592px;top:268.12px;font-size:12.8px;line-height:12.8px;color:#000;">24.334</div>
<div class="a t" style="left:24px;top:288.12px;font-size:12.8px;line-height:12.8px;color:#000;width:108px;text-align:right;">02.06.2019</div>
<div class="a t" style="left:137px;top:288.12px;font-size:12.8px;line-height:12.8px;color:#000;">25.475</div>
<div class="a t" style="left:290px;top:288.12px;font-size:12.8px;line-height:12.8px;color:#000;">33.722</div>
<div class="a t" style="left:443px;top:288.12px;font-size:12.8px;line-height:12.8px;color:#000;">14.673</div>
<div class="a t" style="left:592px;top:288.12px;font-size:12.8px;line-height:12.8px;color:#000;">24.456</div>
<div class="a t" style="left:24px;top:308.12px;font-size:12.8px;line-height:12.8px;color:#000;width:108px;text-align:right;">03.06.2019</div>
<div class="a t" style="left:137px;top:308.12px;font-size:12.8px;line-height:12.8px;color:#000;">25.73</div>
<div class="a t" style="left:290px;top:308.12px;font-size:12.8px;line-height:12.8px;color:#000;">34.228</div>
<div class="a t" style="left:443px;top:308.12px;font-size:12.8px;line-height:12.8px;color:#000;">14.791</div>
<div class="a t" style="left:592px;top:308.12px;font-size:12.8px;line-height:12.8px;color:#000;">24.578</div>
<div class="a t" style="left:24px;top:328.12px;font-size:12.8px;line-height:12.8px;color:#000;width:108px;text-align:right;">04.06.2019</div>
<div class="a t" style="left:137px;top:328.12px;font-size:12.8px;line-height:12.8px;color:#000;">25.987</div>
<div class="a t" style="left:290px;top:328.12px;font-size:12.8px;line-height:12.8px;color:#000;">34.742</div>
<div class="a t" style="left:443px;top:328.12px;font-size:12.8px;line-height:12.8px;color:#000;">14.909</div>
<div class="a t" style="left:592px;top:328.12px;font-size:12.8px;line-height:12.8px;color:#000;">24.701</div>
<div class="a t" style="left:24px;top:348.12px;font-size:12.8px;line-height:12.8px;color:#000;width:108px;text-align:right;">05.06.2019</div>
<div class="a t" style="left:137px;top:348.12px;font-size:12.8px;line-height:12.8px;color:#000;">26.247</div>
<div class="a t" style="left:290px;top:348.12px;font-size:12.8px;line-height:12.8px;color:#000;">35.263</div>
<div class="a t" style="left:443px;top:348.12px;font-size:12.8px;line-height:12.8px;color:#000;">15.028</div>
<div class="a t" style="left:592px;top:348.12px;font-size:12.8px;line-height:12.8px;color:#000;">24.824</div>
<div class="a t" style="left:24px;top:368.12px;font-size:12.8px;line-height:12.8px;color:#000;width:108px;text-align:right;">06.06.2019</div>
<div class="a t" style="left:137px;top:368.12px;font-size:12.8px;line-height:12.8px;color:#000;">26.51</div>
<div class="a t" style="left:290px;top:368.12px;font-size:12.8px;line-height:12.8px;color:#000;">35.792</div>
<div class="a t" style="left:443px;top:368.12px;font-size:12.8px;line-height:12.8px;color:#000;">15.149</div>
<div class="a t" style="left:592px;top:368.12px;font-size:12.8px;line-height:12.8px;color:#000;">24.948</div>
<div class="a t" style="left:24px;top:388.12px;font-size:12.8px;line-height:12.8px;color:#000;width:108px;text-align:right;">07.06.2019</div>
<div class="a t" style="left:137px;top:388.12px;font-size:12.8px;line-height:12.8px;color:#000;">26.775</div>
<div class="a t" style="left:290px;top:388.12px;font-size:12.8px;line-height:12.8px;color:#000;">36.329</div>
<div class="a t" style="left:443px;top:388.12px;font-size:12.8px;line-height:12.8px;color:#000;">15.27</div>
<div class="a t" style="left:592px;top:388.12px;font-size:12.8px;line-height:12.8px;color:#000;">25.073</div>
<div class="a t" style="left:24px;top:408.12px;font-size:12.8px;line-height:12.8px;color:#000;width:108px;text-align:right;">08.06.2019</div>
<div class="a t" style="left:137px;top:408.12px;font-size:12.8px;line-height:12.8px;color:#000;">27.042</div>
<div class="a t" style="left:290px;top:408.12px;font-size:12.8px;line-height:12.8px;color:#000;">36.873</div>
<div class="a t" style="left:24px;top:428.12px;font-size:12.8px;line-height:12.8px;color:#000;width:108px;text-align:right;">09.06.2019</div>
<div class="a t" style="left:137px;top:428.12px;font-size:12.8px;line-height:12.8px;color:#000;">27.313</div>
<div class="a t" style="left:290px;top:428.12px;font-size:12.8px;line-height:12.8px;color:#000;">37.427</div>
<div class="a t" style="left:24px;top:448.12px;font-size:12.8px;line-height:12.8px;color:#000;width:108px;text-align:right;">10.06.2019</div>
<div class="a t" style="left:137px;top:448.12px;font-size:12.8px;line-height:12.8px;color:#000;">27.586</div>
<div class="a t" style="left:290px;top:448.12px;font-size:12.8px;line-height:12.8px;color:#000;">37.988</div>
<div class="a t" style="left:24px;top:468.12px;font-size:12.8px;line-height:12.8px;color:#000;width:108px;text-align:right;">11.06.2019</div>
<div class="a t" style="left:137px;top:468.12px;font-size:12.8px;line-height:12.8px;color:#000;">27.862</div>
<div class="a t" style="left:290px;top:468.12px;font-size:12.8px;line-height:12.8px;color:#000;">38.558</div>
<div class="a t" style="left:24px;top:488.12px;font-size:12.8px;line-height:12.8px;color:#000;width:108px;text-align:right;">12.06.2019</div>
<div class="a t" style="left:137px;top:488.12px;font-size:12.8px;line-height:12.8px;color:#000;">28.141</div>
<div class="a t" style="left:290px;top:488.12px;font-size:12.8px;line-height:12.8px;color:#000;">39.136</div>
<div class="a t" style="left:24px;top:508.12px;font-size:12.8px;line-height:12.8px;color:#000;width:108px;text-align:right;">13.06.2019</div>
<div class="a t" style="left:137px;top:508.12px;font-size:12.8px;line-height:12.8px;color:#000;">28.422</div>
<div class="a t" style="left:290px;top:508.12px;font-size:12.8px;line-height:12.8px;color:#000;">39.723</div>
<div class="a t" style="left:24px;top:528.12px;font-size:12.8px;line-height:12.8px;color:#000;width:108px;text-align:right;">14.06.2019</div>
<div class="a t" style="left:137px;top:528.12px;font-size:12.8px;line-height:12.8px;color:#000;">28.706</div>
<div class="a t" style="left:290px;top:528.12px;font-size:12.8px;line-height:12.8px;color:#000;">40.319</div>
<div class="a t" style="left:24px;top:548.12px;font-size:12.8px;line-height:12.8px;color:#000;width:108px;text-align:right;">15.06.2019</div>
<div class="a t" style="left:137px;top:548.12px;font-size:12.8px;line-height:12.8px;color:#000;">28.993</div>
<div class="a t" style="left:290px;top:548.12px;font-size:12.8px;line-height:12.8px;color:#000;">40.924</div>
<div class="a" style="left:3px;top:167px;width:102px;height:26px;background:#fcfcfc;border:1px solid #c6c6c6;"></div>
<div class="a t" style="left:10px;top:174.80px;font-size:12px;line-height:12px;color:#262626;">B2</div>
<svg class="a" style="left:89px;top:177px;" width="8" height="5" viewBox="0 0 8 5"><path d="M0 0h8L4 4z" fill="#555"/></svg>
<div class="a" style="left:119px;top:176px;width:2px;height:2px;background:#a0a0a0;"></div>
<div class="a" style="left:119px;top:180px;width:2px;height:2px;background:#a0a0a0;"></div>
<div class="a" style="left:119px;top:184px;width:2px;height:2px;background:#a0a0a0;"></div>
<div class="a" style="left:135px;top:167px;width:110px;height:26px;background:#fafafa;border:1px solid #d6d6d6;"></div>
<svg class="a" style="left:147px;top:174px;" width="12" height="12" viewBox="0 0 12 12"><path d="M1 1l10 10M11 1L1 11" stroke="#c0c0c0" stroke-width="1.2"/></svg>
<svg class="a" style="left:183px;top:174px;" width="13" height="12" viewBox="0 0 13 12"><path d="M1 6l4 4 7-9" fill="none" stroke="#c0c0c0" stroke-width="1.6"/></svg>
<div class="a t" style="left:221px;top:173.95px;font-size:13px;line-height:13px;color:#555;font-family:'Liberation Serif';font-weight:bold;"><i>f</i><span style='font-size:10px'>x</span></div>
<div class="a" style="left:248px;top:167px;width:769px;height:26px;background:#fafafa;border:1px solid #d6d6d6;"></div>
<div class="a t" style="left:259px;top:174.38px;font-size:12.5px;line-height:12.5px;color:#262626;">25.223</div>
<svg class="a" style="left:1007px;top:178px;" width="10" height="6" viewBox="0 0 10 6"><path d="M1 1l4 4 4-4" fill="none" stroke="#555" stroke-width="1.4"/></svg>
<div class="a" style="left:431px;top:397px;width:480px;height:243px;background:#f0f0f0;border:1px solid #a9a9a9;box-shadow:1px 2px 7px 1px rgba(0,0,0,0.16);"></div>
<div class="a" style="left:432px;top:398px;width:478px;height:30px;background:#fff;"></div>
<div class="a t" style="left:440.5px;top:407.06px;font-size:11.7px;line-height:11.7px;color:#9a9a9a;">Найти и заменить</div>
<div class="a t" style="left:840px;top:406.38px;font-size:12.5px;line-height:12.5px;color:#9a9a9a;">?</div>
<svg class="a" style="left:882px;top:407px;" width="11" height="11" viewBox="0 0 11 11"><path d="M0.5 0.5l10 10M10.5 0.5l-10 10" stroke="#8a8a8a" stroke-width="1.1"/></svg>
<div class="a" style="left:438px;top:456px;width:464px;height:144px;background:#fff;border:1px solid #d9d9d9;"></div>
<div class="a" style="left:438px;top:437px;width:53px;height:20px;background:#f0f0f0;border:1px solid #d9d9d9;border-bottom:none;"></div>
<div class="a" style="left:490px;top:435px;width:73px;height:22px;background:#fff;border:1px solid #d9d9d9;border-bottom:none;"></div>
<div class="a t" style="left:449.5px;top:442.89px;font-size:11.3px;line-height:11.3px;color:#000;">На<u>й</u>ти</div>
<div class="a t" style="left:501px;top:442.39px;font-size:11.3px;line-height:11.3px;color:#000;">Заменит<u>ь</u></div>
<div class="a t" style="left:447.5px;top:471.39px;font-size:11.3px;line-height:11.3px;color:#000;">Найт<u>и</u>:</div>
<div class="a t" style="left:447.5px;top:493.89px;font-size:11.3px;line-height:11.3px;color:#000;">З<u>а</u>менить на:</div>
<div class="a t" style="left:447.5px;top:525.39px;font-size:11.3px;line-height:11.3px;color:#000;">И<u>с</u>кать:</div>
<div class="a t" style="left:447.5px;top:550.39px;font-size:11.3px;line-height:11.3px;color:#000;">Прос<u>м</u>атривать:</div>
<div class="a t" style="left:447.5px;top:575.39px;font-size:11.3px;line-height:11.3px;color:#000;">О<u>б</u>ласть поиска:</div>
<div class="a" style="left:526px;top:467px;width:149px;height:19px;background:#fff;border:1px solid #adadad;"></div>
<div class="a" style="left:657px;top:468px;width:17px;height:17px;background:#e5e5e5;border-left:1px solid #cfcfcf;"></div>
<svg class="a" style="left:661px;top:473px;" width="10" height="6" viewBox="0 0 10 6"><path d="M0.5 0.5l4.5 4.5 4.5-4.5" fill="none" stroke="#555" stroke-width="1"/></svg>
<div class="a t" style="left:530px;top:471.80px;font-size:12px;line-height:12px;color:#000;">.</div>
<div class="a" style="left:526px;top:489px;width:149px;height:20px;background:#fff;border:1px solid #adadad;"></div>
<div class="a" style="left:657px;top:490px;width:17px;height:18px;background:#e5e5e5;border-left:1px solid #cfcfcf;"></div>
<svg class="a" style="left:661px;top:496px;" width="10" height="6" viewBox="0 0 10 6"><path d="M0.5 0.5l4.5 4.5 4.5-4.5" fill="none" stroke="#555" stroke-width="1"/></svg>
<div class="a t" style="left:530px;top:493.80px;font-size:12px;line-height:12px;color:#000;">,</div>
<div class="a" style="left:544px;top:519px;width:100px;height:21px;background:#fff;border:1px solid #adadad;"></div>
<div class="a" style="left:626px;top:520px;width:17px;height:19px;background:#e5e5e5;border-left:1px solid #cfcfcf;"></div>
<svg class="a" style="left:630px;top:526px;" width="10" height="6" viewBox="0 0 10 6"><path d="M0.5 0.5l4.5 4.5 4.5-4.5" fill="none" stroke="#555" stroke-width="1"/></svg>
<div class="a t" style="left:549px;top:524.48px;font-size:11.2px;line-height:11.2px;color:#000;">на листе</div>
<div class="a" style="left:544px;top:544px;width:100px;height:22px;background:#fff;border:1px solid #adadad;"></div>
<div class="a" style="left:626px;top:545px;width:17px;height:20px;background:#e5e5e5;border-left:1px solid #cfcfcf;"></div>
<svg class="a" style="left:630px;top:552px;" width="10" height="6" viewBox="0 0 10 6"><path d="M0.5 0.5l4.5 4.5 4.5-4.5" fill="none" stroke="#555" stroke-width="1"/></svg>
<div class="a t" style="left:549px;top:550.48px;font-size:11.2px;line-height:11.2px;color:#000;">по строкам</div>
<div class="a" style="left:544px;top:569px;width:100px;height:22px;background:#fff;border:1px solid #adadad;"></div>
<div class="a" style="left:626px;top:570px;width:17px;height:20px;background:#e5e5e5;border-left:1px solid #cfcfcf;"></div>
<svg class="a" style="left:630px;top:577px;" width="10" height="6" viewBox="0 0 10 6"><path d="M0.5 0.5l4.5 4.5 4.5-4.5" fill="none" stroke="#555" stroke-width="1"/></svg>
<div class="a t" style="left:549px;top:575.48px;font-size:11.2px;line-height:11.2px;color:#000;">формулы</div>
<div class="a" style="left:684px;top:466px;width:111px;height:20px;background:#fff;border:1px solid #000;"></div>
<div class="a t" style="left:684px;top:471.39px;font-size:11.3px;line-height:11.3px;color:#000;width:111px;text-align:center;">Формат не задан</div>
<div class="a" style="left:684px;top:489px;width:111px;height:20px;background:#fff;border:1px solid #000;"></div>
<div class="a t" style="left:684px;top:493.19px;font-size:13.9px;line-height:13.9px;color:#000;width:111px;text-align:center;">Образец*</div>
<div class="a" style="left:805px;top:467px;width:89px;height:19px;background:#e1e1e1;border:1px solid #adadad;"></div>
<div class="a t" style="left:809px;top:471.39px;font-size:11.3px;line-height:11.3px;color:#000;width:85px;text-align:center;">Форма<u>т</u>...&nbsp;&nbsp;&nbsp;</div>
<svg class="a" style="left:885px;top:475px;" width="6" height="3" viewBox="0 0 6 3"><path d="M0 0h6L3 3z" fill="#000"/></svg>
<div class="a" style="left:805px;top:490px;width:89px;height:19px;background:#e1e1e1;border:2px solid #0078d7;"></div>
<div class="a t" style="left:809px;top:494.39px;font-size:11.3px;line-height:11.3px;color:#000;width:85px;text-align:center;">Форма<u>т</u>...&nbsp;&nbsp;&nbsp;</div>
<div class="a" style="left:883px;top:493px;width:1px;height:13px;background:#888;"></div>
<svg class="a" style="left:885px;top:498px;" width="6" height="3" viewBox="0 0 6 3"><path d="M0 0h6L3 3z" fill="#000"/></svg>
<div class="a" style="left:653px;top:520px;width:13px;height:13px;background:#fff;border:1px solid #333;"></div>
<div class="a" style="left:653px;top:539px;width:13px;height:13px;background:#fff;border:1px solid #333;"></div>
<div class="a t" style="left:669.5px;top:522.39px;font-size:11.3px;line-height:11.3px;color:#000;"><u>У</u>читывать регистр</div>
<div class="a t" style="left:669.5px;top:541.39px;font-size:11.3px;line-height:11.3px;color:#000;">Ячейка ц<u>е</u>ликом</div>
<div class="a" style="left:797px;top:568px;width:97px;height:22px;background:#e1e1e1;border:1px solid #adadad;"></div>
<div class="a t" style="left:797px;top:573.89px;font-size:11.3px;line-height:11.3px;color:#000;width:97px;text-align:center;"><u>П</u>араметры &lt; &lt;</div>
<div class="a" style="left:452px;top:609px;width:89px;height:22px;background:#e1e1e1;border:1px solid #adadad;"></div>
<div class="a t" style="left:452px;top:614.89px;font-size:11.3px;line-height:11.3px;color:#000;width:89px;text-align:center;">Заменить <u>в</u>се</div>
<div class="a" style="left:550px;top:609px;width:74px;height:22px;background:#e1e1e1;border:1px solid #adadad;"></div>
<div class="a t" style="left:550px;top:614.89px;font-size:11.3px;line-height:11.3px;color:#000;width:74px;text-align:center;"><u>З</u>аменить</div>
<div class="a" style="left:643px;top:609px;width:73px;height:22px;background:#e1e1e1;border:1px solid #adadad;"></div>
<div class="a t" style="left:643px;top:614.89px;font-size:11.3px;line-height:11.3px;color:#000;width:73px;text-align:center;"><u>Н</u>айти все</div>
<div class="a" style="left:727px;top:609px;width:83px;height:22px;background:#e1e1e1;border:1px solid #adadad;"></div>
<div class="a t" style="left:727px;top:614.89px;font-size:11.3px;line-height:11.3px;color:#000;width:83px;text-align:center;">Найти да<u>л</u>ее</div>
<div class="a" style="left:829px;top:609px;width:74px;height:22px;background:#e1e1e1;border:1px solid #adadad;"></div>
<div class="a t" style="left:829px;top:614.89px;font-size:11.3px;line-height:11.3px;color:#000;width:74px;text-align:center;">Закрыть</div>
<div class="a" style="left:444px;top:603px;width:101px;height:33px;border:3px solid #ff0000;border-radius:9px;"></div>
<div class="a" style="left:1003px;top:203px;width:17px;height:473px;background:#e6e6e6;"></div>
<div class="a" style="left:1006px;top:205px;width:14px;height:15px;background:#fff;border:1px solid #c6c6c6;"></div>
<svg class="a" style="left:1010px;top:210px;" width="7" height="4" viewBox="0 0 7 4"><path d="M0 4h7L3.5 0z" fill="#606060"/></svg>
<div class="a" style="left:1006px;top:221px;width:14px;height:418px;background:#fff;border:1px solid #b9b9b9;"></div>
<div class="a" style="left:1006px;top:639px;width:14px;height:23px;background:#dadada;"></div>
<div class="a" style="left:1006px;top:662px;width:14px;height:15px;background:#fff;border:1px solid #c6c6c6;"></div>
<svg class="a" style="left:1010px;top:668px;" width="7" height="4" viewBox="0 0 7 4"><path d="M0 0h7L3.5 4z" fill="#606060"/></svg>
<div class="a" style="left:1px;top:677px;width:1019px;height:27px;background:#e6e6e6;"></div>
<div class="a" style="left:1px;top:676px;width:1002px;height:1px;background:#9eb0a8;"></div>
<svg class="a" style="left:25px;top:685px;" width="5" height="9" viewBox="0 0 5 9"><path d="M5 0v9L0 4.5z" fill="#b0b0b0"/></svg>
<svg class="a" style="left:53px;top:685px;" width="5" height="9" viewBox="0 0 5 9"><path d="M0 0v9l5-4.5z" fill="#b0b0b0"/></svg>
<div class="a" style="left:98px;top:676px;width:107px;height:25px;background:#fff;border:1px solid #9eb0a8;border-top:none;"></div>
<div class="a" style="left:98px;top:699px;width:107px;height:2px;background:#217346;"></div>
<div class="a t" style="left:98px;top:683.62px;font-size:12.8px;line-height:12.8px;color:#217346;font-weight:bold;width:107px;text-align:center;">microexcel.ru</div>
<svg class="a" style="left:238px;top:682px;" width="17" height="17" viewBox="0 0 17 17"><circle cx="8.5" cy="8.5" r="7.5" fill="none" stroke="#666" stroke-width="1.2"/><path d="M8.5 4v9M4 8.5h9" stroke="#444" stroke-width="1.6"/></svg>
<div class="a" style="left:613px;top:685px;width:2px;height:2px;background:#a8a8a8;"></div>
<div class="a" style="left:613px;top:689px;width:2px;height:2px;background:#a8a8a8;"></div>
<div class="a" style="left:613px;top:693px;width:2px;height:2px;background:#a8a8a8;"></div>
<div class="a" style="left:630px;top:683px;width:373px;height:15px;background:#dadada;"></div>
<div class="a" style="left:630px;top:683px;width:15px;height:15px;background:#fff;border:1px solid #c6c6c6;"></div>
<svg class="a" style="left:635px;top:686px;" width="5" height="9" viewBox="0 0 5 9"><path d="M5 0v9L0 4.5z" fill="#606060"/></svg>
<div class="a" style="left:645px;top:683px;width:303px;height:15px;background:#fff;border:1px solid #b9b9b9;"></div>
<div class="a" style="left:988px;top:683px;width:15px;height:15px;background:#fff;border:1px solid #c6c6c6;"></div>
<svg class="a" style="left:992px;top:686px;" width="5" height="9" viewBox="0 0 5 9"><path d="M0 0v9l5-4.5z" fill="#606060"/></svg>
<div class="a" style="left:1px;top:704px;width:1019px;height:21px;background:#f3f3f3;"></div>
<div class="a" style="left:1px;top:704px;width:1019px;height:1px;background:#d0d0d0;"></div>
<svg class="a" style="left:6px;top:707px;" width="14" height="14" viewBox="0 0 14 14"><circle cx="3.5" cy="3.5" r="3" fill="#555"/><rect x="3.5" y="4.5" width="10" height="9" fill="#fff" stroke="#555"/><path d="M3.5 7.5h10M3.5 10.5h10M7 4.5v9M10 4.5v9" stroke="#555"/></svg>
<div class="a t" style="left:626px;top:708.89px;font-size:11.3px;line-height:11.3px;color:#333;">Количество: 60</div>
<div class="a" style="left:724px;top:704px;width:38px;height:21px;background:#c6c6c6;"></div>
<svg class="a" style="left:736px;top:708px;" width="14" height="13" viewBox="0 0 14 13"><path d="M0.5 0.5h13v12h-13zM0.5 4.5h13M0.5 8.5h13M4.5 0.5v12M9.5 0.5v12" fill="none" stroke="#555"/></svg>
<svg class="a" style="left:773px;top:708px;" width="15" height="13" viewBox="0 0 15 13"><rect x="0.5" y="0.5" width="14" height="12" fill="none" stroke="#555"/><rect x="3.5" y="2.5" width="8" height="8" fill="none" stroke="#555"/><path d="M5 4.5h5M5 6.5h5M5 8.5h5" stroke="#777"/></svg>
<svg class="a" style="left:811px;top:708px;" width="15" height="13" viewBox="0 0 15 13"><path d="M0.5 12.5v-12h14v12zM0.5 7.5h5v-7M9.5 0.5v7h5" fill="none" stroke="#555"/></svg>
<div class="a" style="left:842px;top:714px;width:8px;height:2px;background:#555;"></div>
<div class="a" style="left:853px;top:714px;width:99px;height:1px;background:#999;"></div>
<div class="a" style="left:900px;top:709px;width:6px;height:11px;background:#555;"></div>
<div class="a" style="left:956px;top:714px;width:8px;height:2px;background:#444;"></div>
<div class="a" style="left:959px;top:711px;width:2px;height:8px;background:#444;"></div>
<div class="a t" style="left:975px;top:709.39px;font-size:11.3px;line-height:11.3px;color:#333;">100 %</div>
<div class="a" style="left:0px;top:0px;width:1px;height:726px;background:#03723d;"></div>
<div class="a" style="left:1020px;top:64px;width:1px;height:662px;background:#03723d;"></div>
<div class="a" style="left:0px;top:725px;width:1021px;height:1px;background:#03723d;"></div>
</body></html>
